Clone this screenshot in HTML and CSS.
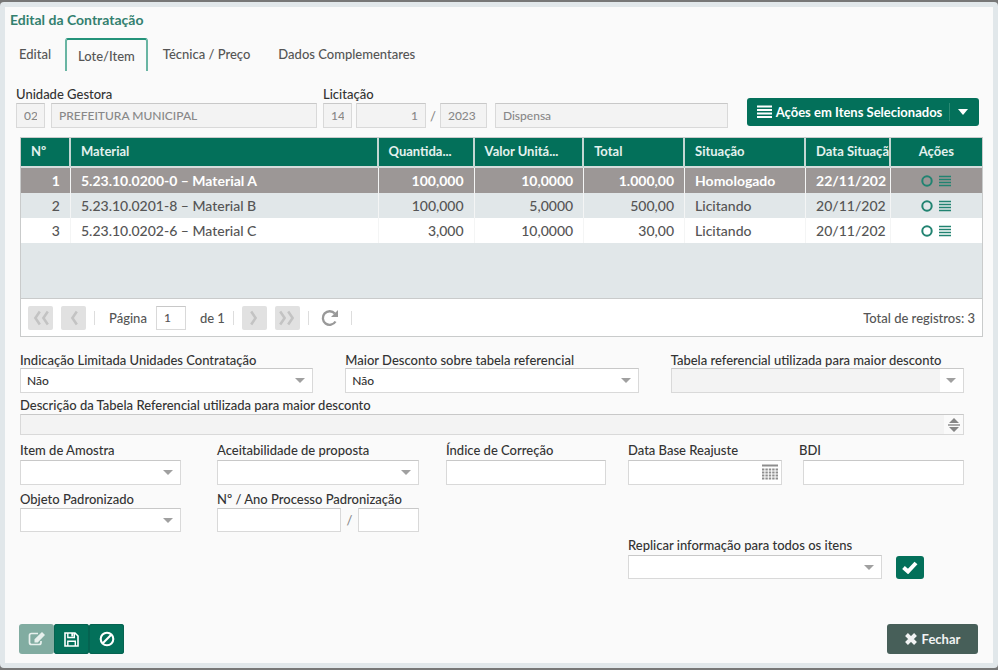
FILE: index.html
```html
<!DOCTYPE html>
<html lang="pt-BR">
<head>
<meta charset="utf-8">
<meta name="viewport" content="width=device-width, initial-scale=1">
<title>Edital da Contratação</title>
<link rel="stylesheet" href="styles.css">
</head>
<body>
<svg class="defs" aria-hidden="true">
  <symbol id="ring" viewBox="0 0 12 12"><circle cx="6" cy="6" r="4.700" fill="none" stroke="currentColor" stroke-width="2"/></symbol>
  <symbol id="lines" viewBox="0 0 12 12"><path d="M0 1.500h12M0 4.500h12M0 7.500h12M0 10.500h12" stroke="currentColor" stroke-width="1.300"/></symbol>
  <symbol id="left" viewBox="0 0 10 18"><path d="M8.500 1 3 9l5.500 8" fill="none" stroke="currentColor" stroke-width="3.200"/></symbol>
  <symbol id="right" viewBox="0 0 10 18"><path d="M1.500 1 7 9l-5.500 8" fill="none" stroke="currentColor" stroke-width="3.200"/></symbol>
</svg>
<main class="dialog">
  <h1>Edital da Contratação</h1>
  <nav class="tabs">
    <a href="#edital">Edital</a>
    <a href="#lote" class="active" aria-current="page">Lote/Item</a>
    <a href="#tecnica">Técnica / Preço</a>
    <a href="#dados">Dados Complementares</a>
  </nav>

  <section class="heading">
    <div class="unit">
      <label for="unidade">Unidade Gestora</label>
      <div class="line">
        <input id="unidade" class="code" value="02" disabled>
        <input class="grow" aria-label="Nome da unidade" value="PREFEITURA MUNICIPAL" disabled>
      </div>
    </div>
    <div class="bid">
      <label for="licitacao">Licitação</label>
      <div class="line">
        <input id="licitacao" class="code" value="14" disabled>
        <input class="number" aria-label="Número" value="1" disabled>
        <span class="slash">/</span>
        <input class="year" aria-label="Ano" value="2023" disabled>
        <input class="grow" aria-label="Modalidade" value="Dispensa" disabled>
      </div>
    </div>
    <button type="button" class="btn bulk">
      <svg width="15" height="14"><path d="M0 1.500h15M0 5h15M0 8.500h15M0 12h15" stroke="currentColor" stroke-width="2.200"/></svg>
      <span>Ações em Itens Selecionados</span>
      <i class="divider"></i>
      <svg width="12" height="8"><path d="M1 1h10L6 7z" fill="currentColor"/></svg>
    </button>
  </section>

  <section class="panel">
    <div class="scroll">
    <table>
      <colgroup><col class="c-num"><col class="c-mat"><col class="c-qty"><col class="c-val"><col class="c-tot"><col class="c-sit"><col class="c-date"><col class="c-act"></colgroup>
      <thead>
        <tr><th>Nº</th><th>Material</th><th>Quantida...</th><th>Valor Unitá...</th><th>Total</th><th>Situação</th><th class="cut">Data Situação</th><th class="acts">Ações</th></tr>
      </thead>
      <tbody>
        <tr class="selected"><td class="r">1</td><td>5.23.10.0200-0 – Material A</td><td class="r">100,000</td><td class="r">10,0000</td><td class="r">1.000,00</td><td>Homologado</td><td class="cut">22/11/202</td><td class="acts"><svg><use href="#ring"/></svg><svg><use href="#lines"/></svg></td></tr>
        <tr class="alt"><td class="r">2</td><td>5.23.10.0201-8 – Material B</td><td class="r">100,000</td><td class="r">5,0000</td><td class="r">500,00</td><td>Licitando</td><td class="cut">20/11/202</td><td class="acts"><svg><use href="#ring"/></svg><svg><use href="#lines"/></svg></td></tr>
        <tr><td class="r">3</td><td>5.23.10.0202-6 – Material C</td><td class="r">3,000</td><td class="r">10,0000</td><td class="r">30,00</td><td>Licitando</td><td class="cut">20/11/202</td><td class="acts"><svg><use href="#ring"/></svg><svg><use href="#lines"/></svg></td></tr>
      </tbody>
    </table>
    </div>
    <div class="pager">
      <button type="button" class="pg" aria-label="Primeira página" disabled><svg><use href="#left"/></svg><svg><use href="#left"/></svg></button>
      <button type="button" class="pg" aria-label="Página anterior" disabled><svg><use href="#left"/></svg></button>
      <i class="sep"></i>
      <label for="pagina">Página</label>
      <input id="pagina" value="1">
      <span>de 1</span>
      <i class="sep"></i>
      <button type="button" class="pg" aria-label="Próxima página" disabled><svg><use href="#right"/></svg></button>
      <button type="button" class="pg" aria-label="Última página" disabled><svg><use href="#right"/></svg><svg><use href="#right"/></svg></button>
      <i class="sep"></i>
      <button type="button" class="refresh" aria-label="Atualizar"><svg width="18" height="18" viewBox="0 0 18 18"><path d="M14.500 12.500A6.800 6.800 0 1 1 13.800 4.600" fill="none" stroke="currentColor" stroke-width="2.300"/><path d="M17 1v7h-7z" fill="currentColor"/></svg></button>
      <i class="sep"></i>
      <span class="total">Total de registros: 3</span>
    </div>
  </section>

  <form class="fields">
    <div class="row three">
      <div class="field"><label for="limitada">Indicação Limitada Unidades Contratação</label><div class="pick"><select id="limitada"><option>Não</option></select></div></div>
      <div class="field"><label for="maior">Maior Desconto sobre tabela referencial</label><div class="pick"><select id="maior"><option>Não</option></select></div></div>
      <div class="field"><label for="tabela">Tabela referencial utilizada para maior desconto</label><div class="pick off"><select id="tabela" disabled><option></option></select></div></div>
    </div>
    <div class="field desc">
      <label for="descricao">Descrição da Tabela Referencial utilizada para maior desconto</label>
      <div class="area"><textarea id="descricao" rows="1" disabled></textarea><span class="handle"><svg width="12" height="14" viewBox="0 0 12 14"><path d="M6 0l5 5H1zM6 14l5-5H1z" fill="#858585"/><path d="M0 7h12" stroke="#aaa" stroke-width="2"/></svg></span></div>
    </div>
    <div class="row five">
      <div class="field k1"><label for="amostra">Item de Amostra</label><div class="pick"><select id="amostra"><option></option></select></div></div>
      <div class="field k2"><label for="aceita">Aceitabilidade de proposta</label><div class="pick"><select id="aceita"><option></option></select></div></div>
      <div class="field k3"><label for="indice">Índice de Correção</label><input id="indice"></div>
      <div class="field k4"><label for="reajuste">Data Base Reajuste</label><div class="date"><input id="reajuste"><svg width="16" height="16" viewBox="0 0 16 16"><path d="M0 1.500h16" stroke="#8e8e8e" stroke-width="2"/><path d="M0 5.500h16M0 8.500h16M0 11.500h16M0 14.500h16" stroke="#8e8e8e" stroke-width="2" stroke-dasharray="2.400 1"/></svg></div></div>
      <div class="field k5"><label for="bdi">BDI</label><input id="bdi"></div>
    </div>
    <div class="row five low">
      <div class="field k1"><label for="objeto">Objeto Padronizado</label><div class="pick"><select id="objeto"><option></option></select></div></div>
      <div class="field k2"><label for="processo">Nº / Ano Processo Padronização</label><div class="pair"><input id="processo"><span class="slash">/</span><input aria-label="Ano do processo"></div></div>
    </div>
    <div class="row five low">
      <div class="field k45"><label for="replicar">Replicar informação para todos os itens</label>
        <div class="replicate"><div class="pick"><select id="replicar"><option></option></select></div>
        <button type="button" class="btn ok" aria-label="Replicar"><svg width="16" height="13" viewBox="0 0 16 13"><path d="M1.500 6.500l4.500 4L14 2" fill="none" stroke="currentColor" stroke-width="4"/></svg></button></div>
      </div>
    </div>
  </form>

  <footer>
    <div class="tools">
      <button type="button" class="btn" aria-label="Editar" disabled><svg width="18" height="16" viewBox="0 0 18 16"><path d="M10 2.500H3.500Q1.500 2.500 1.500 4.500v7Q1.500 13.500 3.500 13.500h7.500q2 0 2-2V10" fill="none" stroke="currentColor" stroke-width="1.700"/><path d="M6.500 11.500v-3.200L14 1l3 3-7.300 7.500z" fill="currentColor"/></svg></button>
      <button type="button" class="btn" aria-label="Salvar"><svg width="15" height="15" viewBox="0 0 15 15"><path d="M1 1h10l3 3v10H1z" fill="none" stroke="currentColor" stroke-width="1.600"/><path d="M3.800 1v4.500h6.500V1M3.800 14V9.200h7.500V14" fill="none" stroke="currentColor" stroke-width="1.400"/><path d="M7.300 1h2v3.500h-2z" fill="currentColor"/></svg></button>
      <button type="button" class="btn" aria-label="Cancelar"><svg width="16" height="16" viewBox="0 0 16 16"><circle cx="8" cy="8" r="6.300" fill="none" stroke="currentColor" stroke-width="2.100"/><path d="M3.800 12.200l8.400-8.400" stroke="currentColor" stroke-width="2.100"/></svg></button>
    </div>
    <button type="button" class="btn close"><svg width="12" height="12" viewBox="0 0 12 12"><path d="M1.500 1.500l9 9M10.500 1.500l-9 9" stroke="currentColor" stroke-width="4"/></svg>Fechar</button>
  </footer>
</main>
</body>
</html>
```
FILE: styles.css
```css
* { box-sizing: border-box; }

body {
  margin: 0;
  padding: 2px 0;
  min-height: 100vh;
  display: flex;
  background: #777;
  color: #333;
  font: 500 13px/16px Lato, "Liberation Sans", sans-serif;
}

input, select, textarea, button { font: inherit; color: inherit; min-width: 0; margin: 0; }
.defs { display: none; }

.dialog {
  flex: 1;
  min-width: 0;
  display: flex;
  flex-direction: column;
  background: #fafafa;
  border: 5px solid #e1e7ea;
  border-radius: 4px;
}

h1 { margin: 5px 5px 0; font-size: 14px; line-height: 16px; color: #33806f; }

.tabs { display: flex; margin: 10px 0 0 14px; height: 33px; }
.tabs a { color: #555; text-decoration: none; padding: 8px 0 0; margin-right: 28px; }
.tabs a:first-child { margin-right: 14px; }
.tabs .active { margin-right: 15px; padding: 8px 11px 0; border: 2px solid #69b5a3; border-top-color: #24937a; border-bottom: 0; border-radius: 3px 3px 0 0; }

label { display: block; white-space: nowrap; }

input, select, textarea {
  display: block;
  width: 100%;
  height: 25px;
  padding: 0 7px;
  border: 1px solid #d9d9d9;
  border-top-color: #c8c8c8;
  border-radius: 0;
  background: #fff;
  font-size: 12px;
}
select { padding: 0 6px; }
input:disabled, textarea:disabled { background: #f3f3f3; color: #888; }

.heading { display: flex; align-items: flex-end; margin: 15px 14px 0 11px; }
.heading label { margin-bottom: 1px; }
.unit { flex: 301; margin-right: 6px; }
.bid { flex: 405; margin-right: 19px; }
.line { display: flex; gap: 4px; align-items: center; }
.unit .line { gap: 6px; }
.line .code { width: 29px; flex: none; }
.line .number { width: 70px; flex: none; text-align: right; }
.line .year { width: 47px; flex: none; }
.line .grow { flex: 1; }
.slash { color: #888; text-align: center; }
.line .year + .grow { margin-left: 4px; }

.btn {
  display: inline-flex;
  align-items: center;
  justify-content: center;
  border: 0;
  border-radius: 3px;
  background: #03705a;
  color: #fff;
  padding: 0;
}
.bulk { width: 232px; height: 28px; margin-bottom: 2px; gap: 4px; font-weight: 700; white-space: nowrap; }
.divider { width: 1px; height: 18px; background: #2a8a73; margin: 0 3px; }

.panel { margin: 9px 10px 0 15px; border: 1px solid #c9cbcb; background: #fff; }
.scroll { height: 161px; background: #e1e7e9; border-bottom: 1px solid #c9cbcb; overflow: hidden; }
table { width: 100%; table-layout: fixed; border-collapse: separate; border-spacing: 0; color: #555; font-size: 14px; }
.c-num { width: 5.2%; }
.c-mat { width: 32%; }
.c-qty { width: 10%; }
.c-val { width: 11.4%; }
.c-tot { width: 10.5%; }
.c-sit { width: 12.6%; }
.c-date { width: 8.8%; }
.c-act { width: 9.5%; }
th, td { padding: 0 10px; overflow: hidden; white-space: nowrap; text-align: left; border-right: 1px solid #f4f5f5; height: 25px; }
th { height: 30px; font-size: 13px; background: #03705a; color: #e4f1ee; border-right: 2px solid #c3d7d3; border-bottom: 2px solid #d5dddc; padding-bottom: 3px; }
th:last-child, td:last-child { border-right: 0; }
tbody tr { background: #fff; }
tbody .alt { background: #e1e7e9; }
tbody .selected { background: #9c9796; color: #fff; font-weight: 700; }
.r { text-align: right; }
.cut { padding-right: 0; }
.acts { text-align: center; color: #218371; }
td.acts svg { width: 12px; height: 12px; margin: 0 3px; vertical-align: -1px; }
th.acts { color: #e4f1ee; }

.pager { display: flex; align-items: center; height: 37px; padding: 0 7px; color: #555; }
.pg { display: flex; align-items: center; justify-content: center; flex: none; width: 25px; height: 24px; padding: 0; border: 0; border-radius: 2px; background: #e1e1e1; color: #c3c3c3; }
.pg + .pg { margin-left: 8px; }
.pg svg { width: 8px; height: 16px; }
.sep { width: 1px; height: 14px; background: #ddd; margin: 0 8px; }
.pager label { margin: 0 9px 0 6px; }
.pager input { width: 30px; height: 24px; margin-right: 14px; }
.refresh { border: 0; padding: 0; margin: 0 4px; background: none; color: #999; display: flex; }
.total { margin-left: auto; }

.fields { margin: 15px 29px 0 15px; color: #333; }
.row { display: grid; }
.three { grid-template-columns: repeat(3, 1fr); column-gap: 32px; }
.five { grid-template-columns: 161fr 36px 202fr 27px 160fr 22px 154fr 17px 165fr; margin-top: 7px; }
.field { min-width: 0; }
.five label { margin-bottom: 2px; }
.k1 { grid-column: 1; }
.k2 { grid-column: 3; }
.k3 { grid-column: 5; }
.k4 { grid-column: 7; }
.k5 { grid-column: 9; }
.k5 input { margin-left: 4px; width: calc(100% - 4px); }
.k45 { grid-column: 7 / 10; }

.pick, .date, .area { position: relative; }
select { appearance: none; opacity: 1; }
.pick::after {
  content: "";
  position: absolute;
  right: 8px;
  top: 10px;
  border: 5px solid transparent;
  border-top-color: #a0a0a0;
  border-bottom: 0;
  pointer-events: none;
}
.off select { background: linear-gradient(to left, #fff 23px, #f3f3f3 23px); }
.desc { margin-top: 4px; }
.desc label { margin-bottom: 1px; }
textarea { height: 21px; resize: none; overflow: hidden; }
.handle { position: absolute; right: 1px; top: 1px; bottom: 1px; width: 19px; display: flex; align-items: center; justify-content: center; background: #fafafa; }
.date svg { position: absolute; right: 4px; top: 4px; }
.low { margin-top: 6px; }
.low label { margin-bottom: 1px; }
.low input, .low select { height: 24px; }
.pair { display: grid; grid-template-columns: 124fr 17px 61fr; align-items: center; }
.low:last-child { margin-top: 5px; }
.low:last-child label { margin-bottom: 2px; }
.replicate { display: flex; align-items: center; }
.replicate .pick { flex: 1; max-width: 254px; }
.ok { width: 28px; height: 23px; margin-left: 14px; }

footer { display: flex; justify-content: space-between; margin: auto 15px 9px 14px; }
.tools { display: flex; }
.tools .btn { width: 35px; height: 30px; box-shadow: inset 0 0 0 1px #056351; }
.tools .btn:disabled { background: #81aca1; box-shadow: none; color: #e7f0ed; }
.close { width: 91px; height: 30px; gap: 5px; background: #475f59; color: #f1f3f3; font-weight: 700; }
```
